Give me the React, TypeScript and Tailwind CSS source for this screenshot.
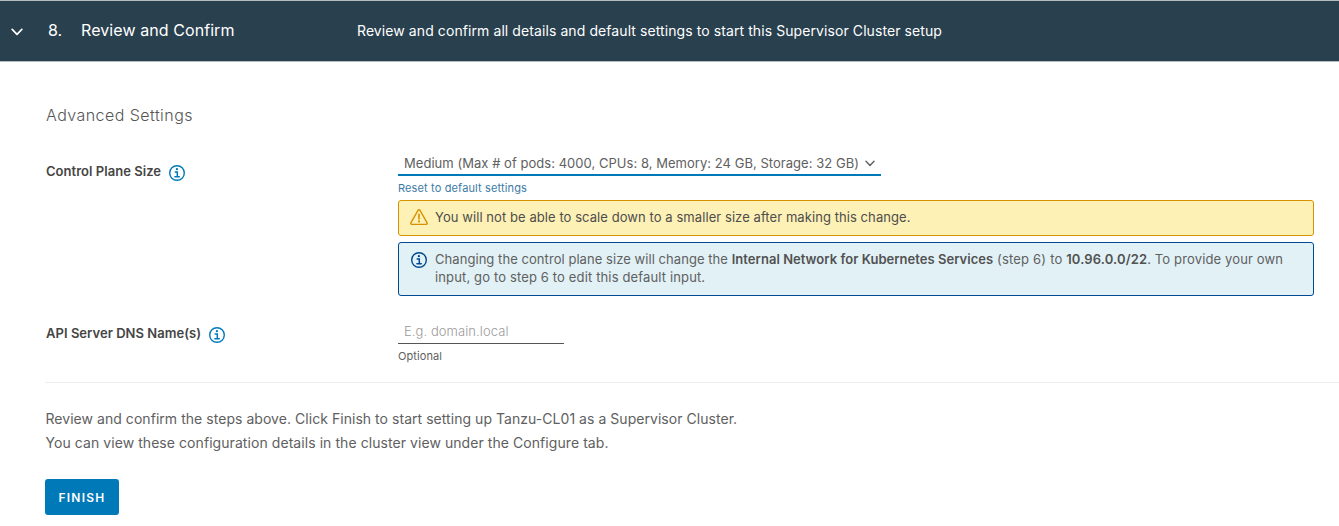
import type { ReactNode } from "react";

function InfoIcon({ className }: { className: string }) {
  return (
    <svg viewBox="0 0 16 16" className={`block size-4 shrink-0 ${className}`} fill="none" stroke="currentColor">
      <circle cx="8" cy="8" r="7.3" strokeWidth="1.4" />
      <circle cx="7.9" cy="4.2" r="1.15" fill="currentColor" stroke="none" />
      <path d="M6.2 7H8.3V11.6M5.9 11.8H10.3" strokeWidth="1.5" strokeLinecap="round" />
    </svg>
  );
}

function WarningIcon() {
  return (
    <svg viewBox="0 0 18 16" className="block h-4 w-[18px] shrink-0 text-[#d69200]" fill="none" stroke="currentColor">
      <path d="M8 1.3 1 13.6Q.2 15.2 1.9 15.3H16.1Q17.8 15.2 17 13.6L10 1.3Q9 .1 8 1.3Z" strokeWidth="1.35" strokeLinejoin="round" />
      <path d="M9 5.2V10" strokeWidth="1.6" strokeLinecap="round" />
      <circle cx="9" cy="12.4" r="1.05" fill="currentColor" stroke="none" />
    </svg>
  );
}

function Chevron({ className }: { className: string }) {
  return (
    <svg viewBox="0 0 12 8" className={`block shrink-0 ${className}`} fill="none" stroke="currentColor" strokeLinecap="round" strokeLinejoin="round">
      <path d="M1.2 1.4 6 6.4 10.8 1.4" strokeWidth="1.7" />
    </svg>
  );
}

function FieldRow({ label, children }: { label: ReactNode; children: ReactNode }) {
  return (
    <div className="flex">
      <div className="flex w-[353px] shrink-0 gap-2 pt-3 pl-px text-[13px] leading-[18px] font-semibold tracking-[0.04px] text-[#454545]">
        {label}
        <InfoIcon className="mt-[3px] text-[#0079b8]" />
      </div>
      <div className="w-[916px]">{children}</div>
    </div>
  );
}

export default function App() {
  return (
    <div className="h-[526px] overflow-hidden bg-white font-['Inter',sans-serif] text-[#606060]">
      <header className="flex h-[62px] items-center border-y border-[#b5bcc0] bg-[#29404e] text-white">
        <Chevron className="mt-px ml-[11px] h-2 w-3" />
        <span className="ml-[25px] w-[33px] pb-0.5 text-base tracking-[0.05px]">8.</span>
        <h2 className="w-[276px] pb-0.5 text-base tracking-[0.08px]">Review and Confirm</h2>
        <p className="text-sm tracking-[0.085px]">Review and confirm all details and default settings to start this Supervisor Cluster setup</p>
      </header>

      <main className="pl-[45px]">
        <h3 className="mt-[41px] pl-px text-base leading-6 font-light tracking-[0.45px] text-[#565656]">Advanced Settings</h3>

        <div className="mt-[23px]">
          <FieldRow label="Control Plane Size">
            <button className="flex h-[26px] w-[483px] items-center border-b-2 border-[#0079b8] pl-1.5 text-[13px] tracking-[0.037px] whitespace-nowrap">
              <span className="pt-[3px]">Medium (Max # of pods: 4000, CPUs: 8, Memory: 24 GB, Storage: 32 GB)</span>
              <Chevron className="mt-[3px] ml-1.5 h-[7px] w-2.5" />
            </button>
            <a className="block h-6 text-[11px] leading-6 tracking-[0.14px] text-[#3c7ba6]">Reset to default settings</a>
            <div className="flex gap-[7px] rounded-[3px] border border-[#d69200] bg-[#fef1b5] pt-[7px] pb-[9px] pl-[11px] text-[13px] leading-[18px] tracking-[0.07px] text-[#4d4d4d]">
              <span className="pt-px"><WarningIcon /></span>
              <p>You will not be able to scale down to a smaller size after making this change.</p>
            </div>
            <div className="mt-1.5 flex gap-2 rounded-[3px] border border-[#004a8f] bg-[#e1f1f6] pt-[7px] pb-[9px] pl-3 text-[13px] leading-[18px]">
              <InfoIcon className="mt-0.5 text-[#004a8f]" />
              <p className="tracking-[0.057px] whitespace-nowrap">
                Changing the control plane size will change the{" "}
                <b className="font-semibold tracking-[0.034px] text-[#525252]">Internal Network for Kubernetes Services</b>{" "}
                <span className="tracking-[0.2px]">(step 6) to</span>{" "}
                <b className="font-semibold tracking-[0.13px] text-[#525252]">10.96.0.0/22</b>
                <span className="tracking-[0.14px]">. To provide your own<br />input, go to step 6 to edit this default input.</span>
              </p>
            </div>
          </FieldRow>
        </div>

        <div className="mt-4">
          <FieldRow label="API Server DNS Name(s)">
            <input
              placeholder="E.g. domain.local"
              className="mt-[7px] block h-[25px] w-[166px] border-b border-[#565656] px-1.5 pb-px text-[13px] font-light tracking-[0.074px] outline-none placeholder:text-[#9a9a9a]"
            />
            <div className="h-6 text-[11px] leading-6 tracking-[0.08px]">Optional</div>
          </FieldRow>
        </div>

        <div className="mt-[14px] border-t border-[#eeeeee] pt-6 text-sm leading-6">
          <p className="pl-[0.5px] tracking-[0.043px]">Review and confirm the steps above. Click Finish to start setting up Tanzu-CL01 as a Supervisor Cluster.</p>
          <p className="pl-[0.5px] tracking-[0.065px]">You can view these configuration details in the cluster view under the Configure tab.</p>
        </div>
        <button className="mt-6 block h-9 w-[74px] rounded-[3px] bg-[#0079b8] pt-px text-xs font-semibold tracking-[1.24px] text-white">FINISH</button>
      </main>
    </div>
  );
}
